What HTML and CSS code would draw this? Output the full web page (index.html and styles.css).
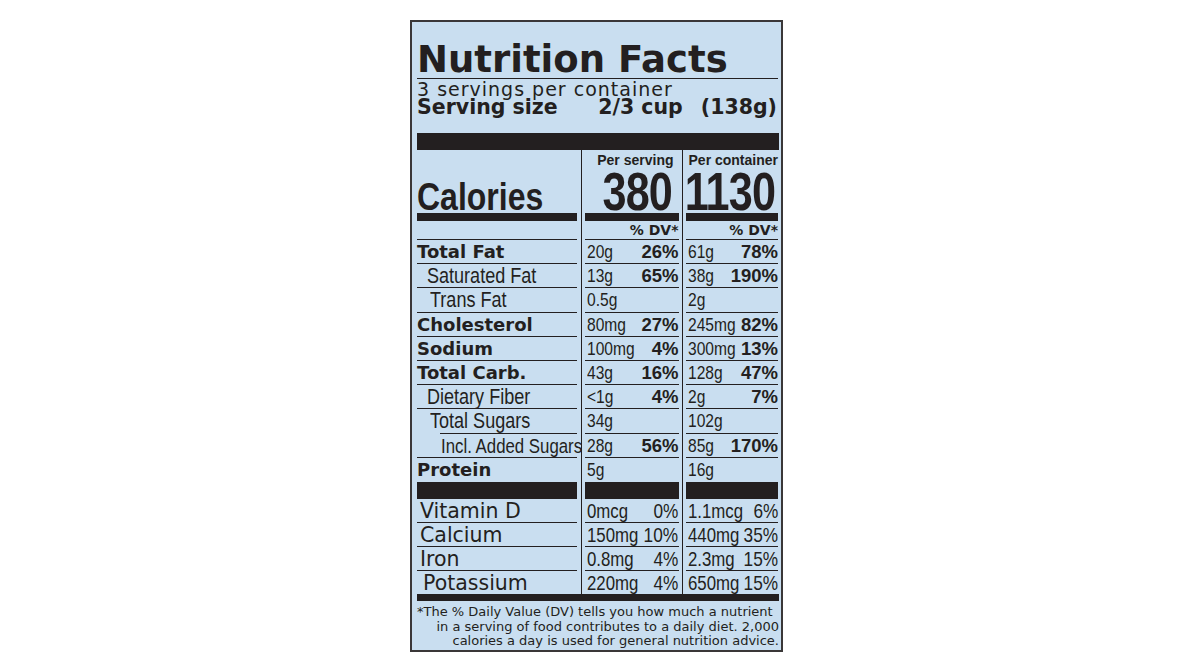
FILE: index.html
```html
<!DOCTYPE html>
<html lang="en">
<head>
<meta charset="utf-8">
<title>Nutrition Facts</title>
<link rel="stylesheet" href="styles.css">
</head>
<body>
<section class="label">
  <h1 class="title">Nutrition Facts</h1>
  <p class="servings">3 servings per container</p>
  <div class="size"><span>Serving size</span><span class="size-amt"><span>2/3 cup</span><span>(138g)</span></span></div>
  <div class="bar bar-top"></div>

  <div class="grid">
    <div class="cell c1 head"><div class="in"><span class="cal">Calories</span></div><div class="thick"></div></div>
    <div class="cell c2 head"><div class="in"><span class="per">Per serving</span><span class="big">380</span></div><div class="thick"></div></div>
    <div class="cell c3 head"><div class="in"><span class="per">Per container</span><span class="big">1130</span></div><div class="thick"></div></div>

    <div class="cell c1 dv"><div class="in"></div></div>
    <div class="cell c2 dv"><div class="in">% DV*</div></div>
    <div class="cell c3 dv"><div class="in">% DV*</div></div>

    <div class="cell c1 n"><div class="in"><span class="b">Total Fat</span></div></div>
    <div class="cell c2 n"><div class="in"><span class="amt">20g</span><span class="pct">26%</span></div></div>
    <div class="cell c3 n"><div class="in"><span class="amt">61g</span><span class="pct">78%</span></div></div>

    <div class="cell c1 n"><div class="in"><span class="s ind1">Saturated Fat</span></div></div>
    <div class="cell c2 n"><div class="in"><span class="amt">13g</span><span class="pct">65%</span></div></div>
    <div class="cell c3 n"><div class="in"><span class="amt">38g</span><span class="pct">190%</span></div></div>

    <div class="cell c1 n"><div class="in"><span class="s ind2">Trans Fat</span></div></div>
    <div class="cell c2 n"><div class="in"><span class="amt">0.5g</span></div></div>
    <div class="cell c3 n"><div class="in"><span class="amt">2g</span></div></div>

    <div class="cell c1 n"><div class="in"><span class="b">Cholesterol</span></div></div>
    <div class="cell c2 n"><div class="in"><span class="amt">80mg</span><span class="pct">27%</span></div></div>
    <div class="cell c3 n"><div class="in"><span class="amt">245mg</span><span class="pct">82%</span></div></div>

    <div class="cell c1 n"><div class="in"><span class="b">Sodium</span></div></div>
    <div class="cell c2 n"><div class="in"><span class="amt">100mg</span><span class="pct">4%</span></div></div>
    <div class="cell c3 n"><div class="in"><span class="amt">300mg</span><span class="pct">13%</span></div></div>

    <div class="cell c1 n"><div class="in"><span class="b">Total Carb.</span></div></div>
    <div class="cell c2 n"><div class="in"><span class="amt">43g</span><span class="pct">16%</span></div></div>
    <div class="cell c3 n"><div class="in"><span class="amt">128g</span><span class="pct">47%</span></div></div>

    <div class="cell c1 n"><div class="in"><span class="s ind1">Dietary Fiber</span></div></div>
    <div class="cell c2 n"><div class="in"><span class="amt">&lt;1g</span><span class="pct">4%</span></div></div>
    <div class="cell c3 n"><div class="in"><span class="amt">2g</span><span class="pct">7%</span></div></div>

    <div class="cell c1 n"><div class="in in-short"><span class="s sugars">Total Sugars</span></div></div>
    <div class="cell c2 n"><div class="in"><span class="amt">34g</span></div></div>
    <div class="cell c3 n"><div class="in"><span class="amt">102g</span></div></div>

    <div class="cell c1 n"><div class="in"><span class="s added">Incl. Added Sugars</span></div></div>
    <div class="cell c2 n"><div class="in"><span class="amt">28g</span><span class="pct">56%</span></div></div>
    <div class="cell c3 n"><div class="in"><span class="amt">85g</span><span class="pct">170%</span></div></div>

    <div class="cell c1 n last"><div class="in"><span class="b">Protein</span></div></div>
    <div class="cell c2 n last"><div class="in"><span class="amt">5g</span></div></div>
    <div class="cell c3 n last"><div class="in"><span class="amt">16g</span></div></div>

    <div class="cell c1 blk"><div class="in"></div></div>
    <div class="cell c2 blk"><div class="in"></div></div>
    <div class="cell c3 blk"><div class="in"></div></div>

    <div class="cell c1 v"><div class="in"><span class="vn">Vitamin D</span></div></div>
    <div class="cell c2 v"><div class="in"><span class="amt">0mcg</span><span class="vp">0%</span></div></div>
    <div class="cell c3 v"><div class="in"><span class="amt">1.1mcg</span><span class="vp">6%</span></div></div>

    <div class="cell c1 v"><div class="in"><span class="vn">Calcium</span></div></div>
    <div class="cell c2 v"><div class="in"><span class="amt">150mg</span><span class="vp">10%</span></div></div>
    <div class="cell c3 v"><div class="in"><span class="amt">440mg</span><span class="vp">35%</span></div></div>

    <div class="cell c1 v"><div class="in"><span class="vn">Iron</span></div></div>
    <div class="cell c2 v"><div class="in"><span class="amt">0.8mg</span><span class="vp">4%</span></div></div>
    <div class="cell c3 v"><div class="in"><span class="amt">2.3mg</span><span class="vp">15%</span></div></div>

    <div class="cell c1 v last"><div class="in"><span class="vn vn-pot">Potassium</span></div></div>
    <div class="cell c2 v last"><div class="in"><span class="amt">220mg</span><span class="vp">4%</span></div></div>
    <div class="cell c3 v last"><div class="in"><span class="amt">650mg</span><span class="vp">15%</span></div></div>
  </div>

  <div class="bar bar-bot"></div>
  <div class="foot">
    <div class="l1">*The % Daily Value (DV) tells you how much a nutrient</div>
    <div class="l2">in a serving of food contributes to a daily diet. 2,000</div>
    <div class="l2">calories a day is used for general nutrition advice.</div>
  </div>
</section>
</body>
</html>
```
FILE: styles.css
```css
* { box-sizing: border-box; margin: 0; padding: 0; }

body {
  background: #ffffff;
  width: 1194px;
  height: 672px;
  overflow: hidden;
}

.label {
  width: 373px;
  margin: 20px 0 0 410px;
  border: 2px solid #3a3738;
  background: #c9def0;
  padding: 0 2px 0 5px;
  color: #231f20;
}

.title {
  font: bold 37px/37px "DejaVu Sans", sans-serif;
  padding-top: 19px;
  border-bottom: 1px solid #231f20;
  margin-right: 1px;
  white-space: nowrap;
}

.servings {
  font: 19px/20px "DejaVu Sans", sans-serif;
  letter-spacing: 1px;
  white-space: nowrap;
}

.size {
  display: flex;
  justify-content: space-between;
  font: bold 20.5px/16px "DejaVu Sans", sans-serif;
  padding-right: 2px;
  white-space: nowrap;
}

.size-amt { display: flex; gap: 18px; }

.bar { background: #231f20; }
.bar-top { height: 17px; margin-top: 18px; }
.bar-bot { height: 7px; }

.grid {
  display: grid;
  grid-template-columns: 164px 101px 97px;
}

.cell { display: flex; flex-direction: column; min-width: 0; }
.c1 { padding-right: 4px; }
.c2 { border-left: 1.5px solid #231f20; padding: 0 3.5px 0 3px; }
.c3 { border-left: 1.5px solid #231f20; padding: 0 1px 0 3px; }

/* condensed look: Liberation Sans narrowed horizontally */
.cal, .big, .s, .amt, .vp {
  display: inline-block;
  font-family: "Liberation Sans", Arial, sans-serif;
  transform: scaleX(0.82);
  transform-origin: left center;
}

/* header */
.head .in {
  height: 63px;
  display: flex;
  flex-direction: column;
  justify-content: flex-end;
  align-items: flex-end;
}
.c1.head .in { align-items: flex-start; }
.thick { height: 8px; background: #231f20; }

.cal {
  font-weight: bold;
  font-size: 39px;
  line-height: 30px;
  margin-bottom: 1px;
}
.per {
  font: bold 14px/14px "Liberation Sans", Arial, sans-serif;
  margin-bottom: 4px;
}
.c2 .per { margin-right: 5px; }
.big {
  font-weight: bold;
  font-size: 54px;
  line-height: 40px;
  letter-spacing: -1px;
  margin-bottom: 2px;
  transform: scaleX(0.8);
  transform-origin: right center;
}
.c2 .big { margin-right: 6px; }
.c3 .big { margin-right: 3px; }

/* %DV row */
.dv .in {
  height: 19px;
  border-bottom: 1.5px solid #231f20;
  text-align: right;
  font: bold 14px/17px "DejaVu Sans", sans-serif;
  padding-top: 1px;
}

/* nutrient rows */
.n .in, .v .in {
  border-bottom: 1.5px solid #231f20;
  padding-top: 1px;
  line-height: 22px;
  display: flex;
  justify-content: space-between;
  align-items: baseline;
  white-space: nowrap;
}
.n .in { height: 24.2px; }
.v .in { height: 23.75px; }
.last .in { border-bottom: none; }

.c2 .in, .c3 .in { padding-left: 2px; }

.b { font: bold 18px/22px "DejaVu Sans", sans-serif; }
.s { font-size: 22px; line-height: 22px; }
.ind1 { margin-left: 10px; }
.ind2 { margin-left: 13px; }
.in-short { margin-left: 23px; }
.sugars { margin-left: -10px; }
.added { font-size: 20.5px; margin-left: 24px; }

.amt {
  font-size: 19px;
  line-height: 22px;
  min-width: 0;
  flex: 0 1 auto;
}
.pct {
  font: bold 18.5px/22px "Liberation Sans", Arial, sans-serif;
  flex: 0 0 auto;
}
.vp {
  font-size: 21px;
  line-height: 22px;
  flex: 0 0 auto;
  transform-origin: right center;
}
.v .amt { font-size: 20.5px; }

.vn { font: 20.5px/22px "DejaVu Sans", sans-serif; padding-left: 3px; }
.vn-pot { padding-left: 6px; }

.blk .in { height: 17.5px; background: #231f20; }

/* footnote */
.foot {
  font: 13px/14.5px "DejaVu Sans", sans-serif;
  padding: 4px 0 1px 0;
  white-space: nowrap;
}
.foot .l2 { text-align: right; }
```
